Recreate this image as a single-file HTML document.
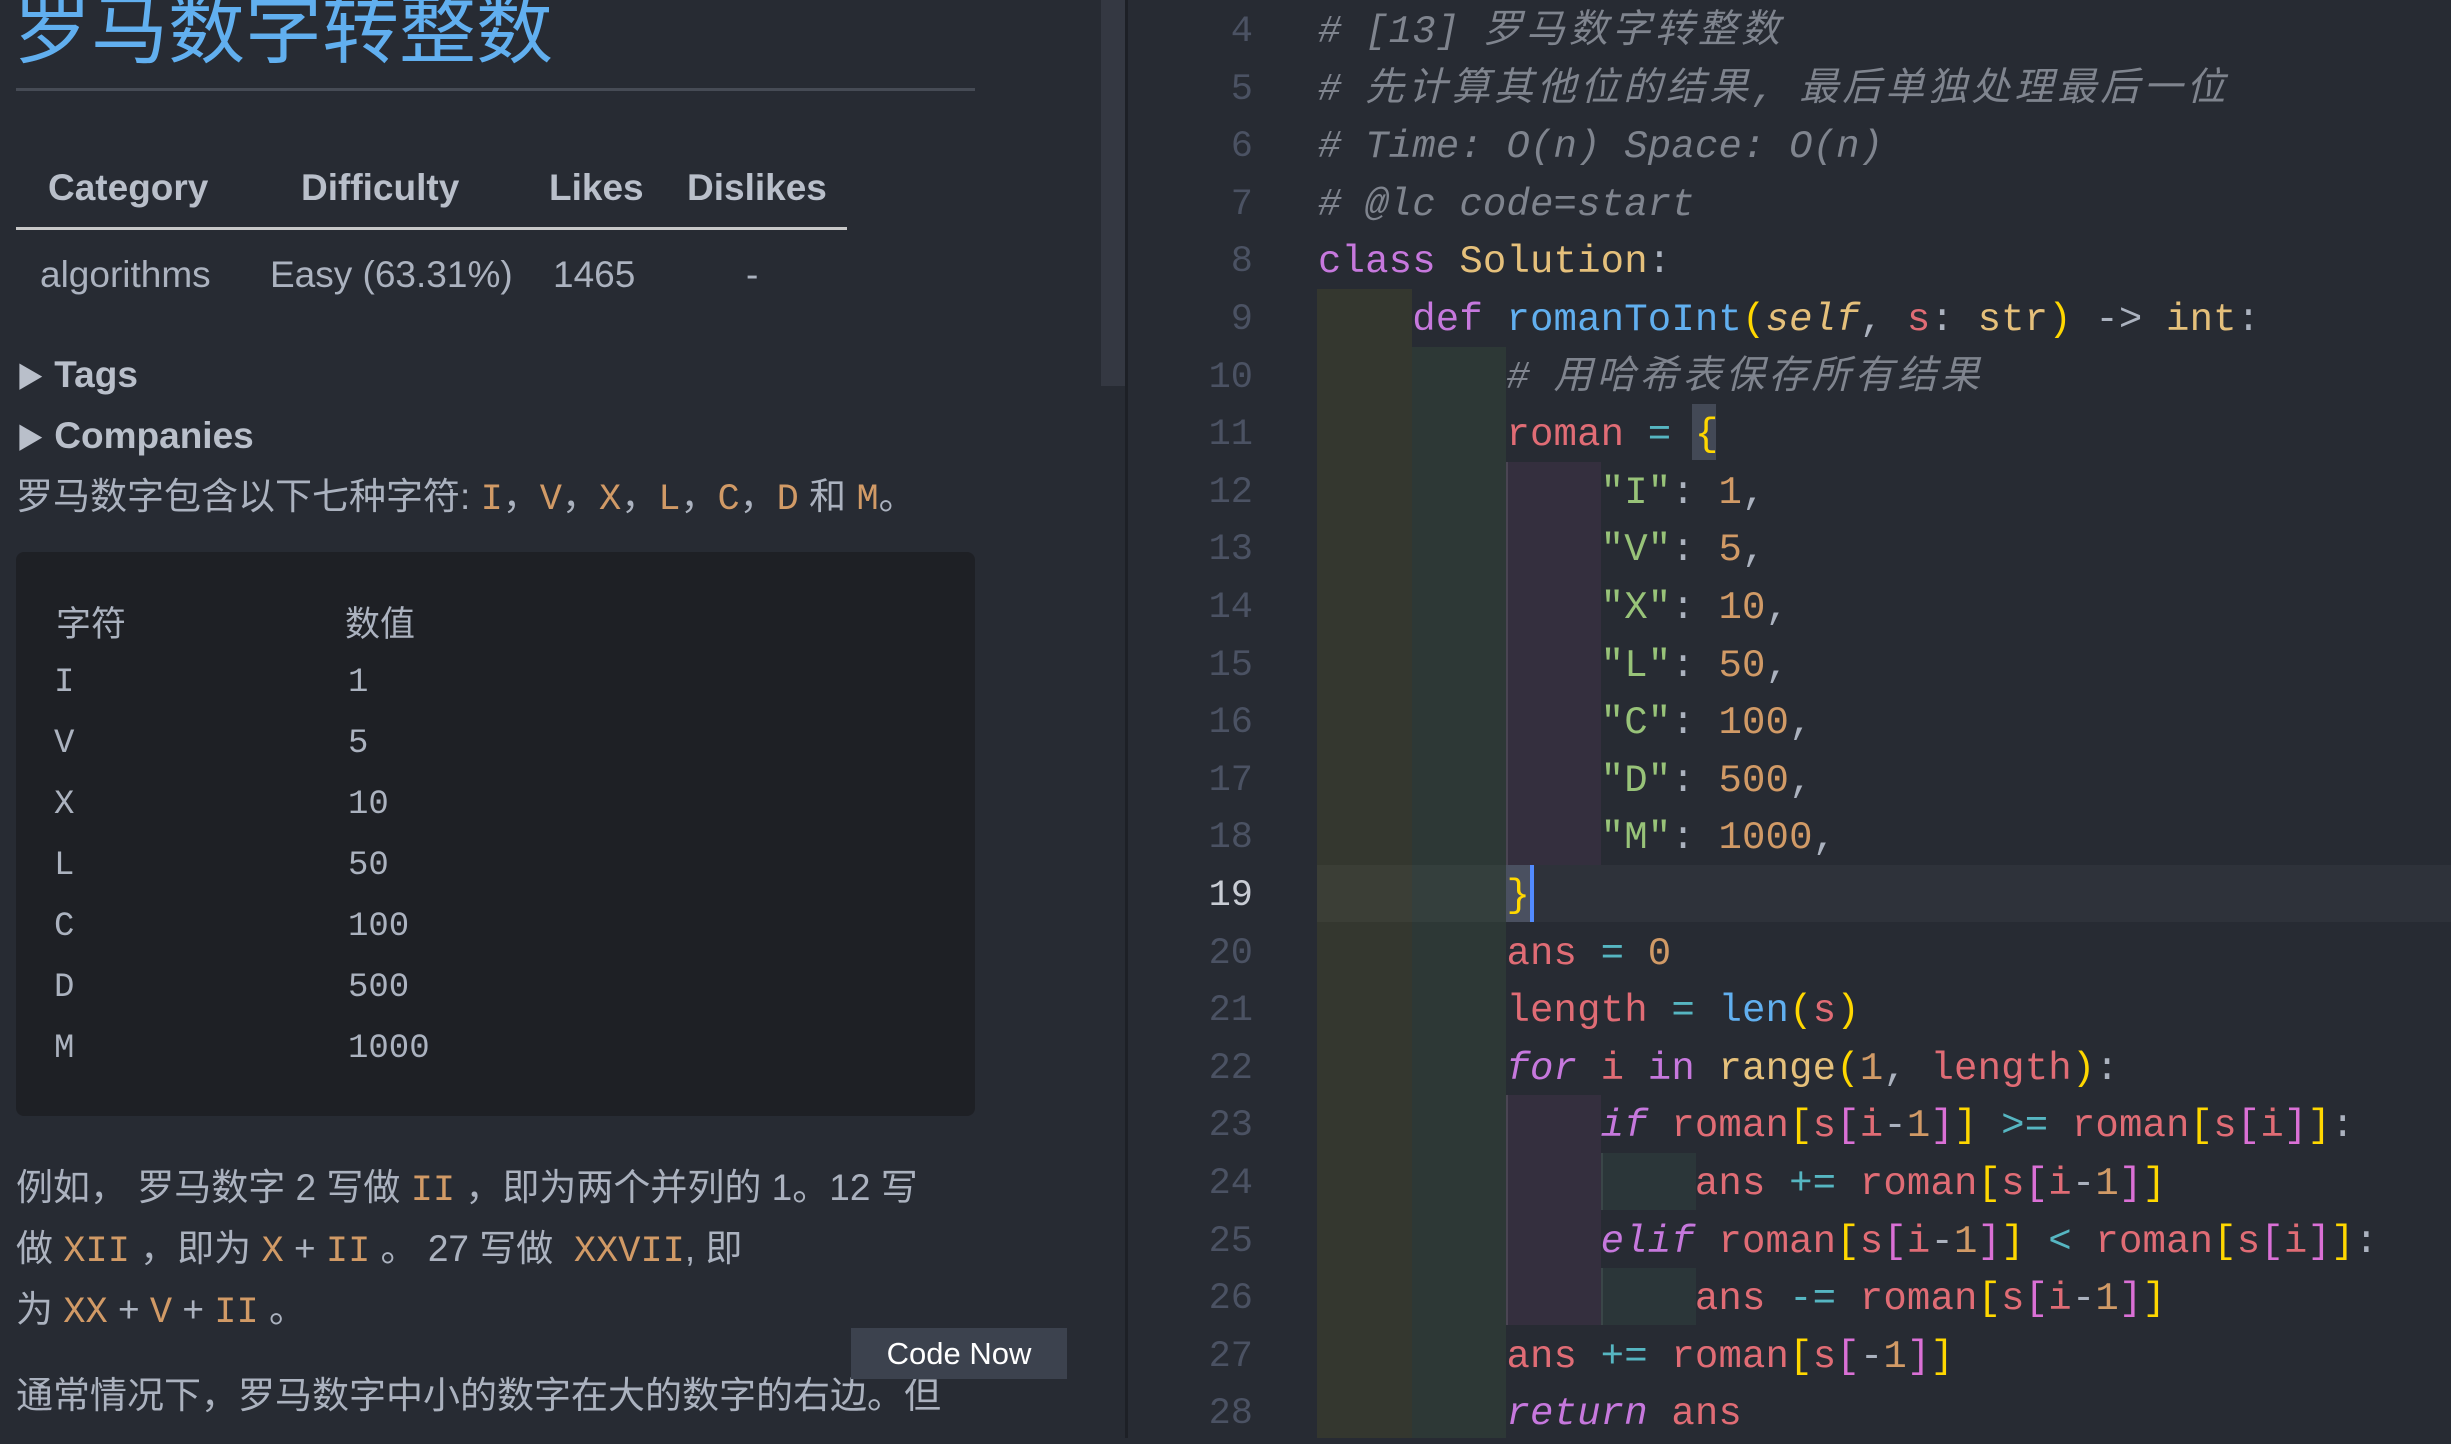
<!DOCTYPE html>
<html><head><meta charset="utf-8"><style>
*{margin:0;padding:0;box-sizing:border-box}
body{width:2451px;height:1438px;overflow:hidden;background:#272b33;position:relative;font-family:"Liberation Sans","Noto Sans CJK SC",sans-serif;color:#abb2bf}
.a{position:absolute;white-space:pre}
#left{position:absolute;left:0;top:0;width:1125px;height:1438px;background:#272b33;overflow:hidden}
#div{position:absolute;left:1125px;top:0;width:3px;height:1438px;background:#1d2026}
#sb{position:absolute;left:1101px;top:0;width:24px;height:386px;background:#343842}
.h{font-weight:bold;font-size:37px;color:#b9bfca;line-height:40px}
.t{font-size:37px;color:#abb2bf;line-height:40px}
.m{font-family:"Liberation Mono","Noto Sans CJK SC",monospace}
.o{color:#d19a66}
.code{position:absolute;left:16px;top:552px;width:959px;height:564px;background:#1e2025;border-radius:8px}
.ct{font-family:"Liberation Mono","Noto Sans CJK SC",monospace;font-size:34px;color:#abb2bf;line-height:40px}
.cz{font-family:"Noto Sans CJK SC",sans-serif;font-size:35px;color:#abb2bf}
.p{font-size:37px;line-height:40px;color:#abb2bf}
#right{position:absolute;left:1128px;top:0;width:1323px;height:1438px;background:#272b33}
.blk{position:absolute}
.ln{position:absolute;left:1128px;width:125px;text-align:right;font-family:"Liberation Mono",monospace;font-size:37px;color:#4b5263;line-height:57.6px;margin-top:3px}
.cl{position:absolute;left:1318px;font-family:"Liberation Mono","Noto Sans CJK SC",monospace;font-size:39px;line-height:57.6px;white-space:pre;color:#abb2bf;margin-top:3px;letter-spacing:0.15px}
.c{color:#7f848e;font-style:italic}
.cj{letter-spacing:4px}
.k{color:#c678dd}.ki{color:#c678dd;font-style:italic}
.y{color:#e5c07b}.yi{color:#e5c07b;font-style:italic}
.b{color:#61afef}.r{color:#e06c75}.g{color:#98c379}.n{color:#d19a66}.op{color:#56b6c2}
.b1{color:#ffd700}.b2{color:#da70d6}
</style></head><body>
<div id="left">
<div class="a" style="left:14px;top:-14px;font-size:77px;line-height:77px;color:#61afef;font-family:'Noto Sans CJK SC',sans-serif">罗马数字转整数</div>
<div class="a" style="left:16px;top:88px;width:959px;height:3px;background:#464b55"></div>
<div class="a h" style="left:48px;top:168px">Category</div>
<div class="a h" style="left:301px;top:168px">Difficulty</div>
<div class="a h" style="left:549px;top:168px">Likes</div>
<div class="a h" style="left:687px;top:168px">Dislikes</div>
<div class="a" style="left:16px;top:227px;width:831px;height:3px;background:#c8c8c8"></div>
<div class="a t" style="left:40px;top:255px">algorithms</div>
<div class="a t" style="left:270px;top:255px">Easy (63.31%)</div>
<div class="a t" style="left:553px;top:255px">1465</div>
<div class="a t" style="left:746px;top:255px">-</div>
<div class="a h" style="left:16px;top:355px"><span style="font-size:28px">▶</span> Tags</div>
<div class="a h" style="left:16px;top:416px"><span style="font-size:28px">▶</span> Companies</div>
<div class="a p" style="left:16px;top:477px">罗马数字包含以下七种字符: <span class="m o">I</span>，<span class="m o">V</span>，<span class="m o">X</span>，<span class="m o">L</span>，<span class="m o">C</span>，<span class="m o">D</span> 和 <span class="m o">M</span>。</div>
<div class="code"></div>
<div class="a cz" style="left:56px;top:596px">字符</div>
<div class="a cz" style="left:345px;top:596px">数值</div>
<div class="a ct" style="left:54px;top:663px">I</div><div class="a ct" style="left:348px;top:663px">1</div>
<div class="a ct" style="left:54px;top:724px">V</div><div class="a ct" style="left:348px;top:724px">5</div>
<div class="a ct" style="left:54px;top:785px">X</div><div class="a ct" style="left:348px;top:785px">10</div>
<div class="a ct" style="left:54px;top:846px">L</div><div class="a ct" style="left:348px;top:846px">50</div>
<div class="a ct" style="left:54px;top:907px">C</div><div class="a ct" style="left:348px;top:907px">100</div>
<div class="a ct" style="left:54px;top:968px">D</div><div class="a ct" style="left:348px;top:968px">500</div>
<div class="a ct" style="left:54px;top:1029px">M</div><div class="a ct" style="left:348px;top:1029px">1000</div>
<div class="a p" style="left:16px;top:1168px">例如， 罗马数字 2 写做 <span class="m o">II</span> ，即为两个并列的 1。12 写</div>
<div class="a p" style="left:16px;top:1229px">做 <span class="m o">XII</span> ，即为 <span class="m o">X</span> + <span class="m o">II</span> 。 27 写做  <span class="m o">XXVII</span>, 即</div>
<div class="a p" style="left:16px;top:1290px">为 <span class="m o">XX</span> + <span class="m o">V</span> + <span class="m o">II</span> 。</div>
<div class="a p" style="left:16px;top:1376px">通常情况下，罗马数字中小的数字在大的数字的右边。但</div>
<div class="a" style="left:851px;top:1328px;width:216px;height:51px;background:#3c424e;color:#fff;font-size:31px;line-height:51px;text-align:center">Code Now</div>
<div id="sb"></div>
</div>
<div id="div"></div>
<div id="right"></div>
<div class="blk" style="left:1317px;top:289px;width:95px;height:1149px;background:#34372f"></div>
<div class="blk" style="left:1412px;top:347px;width:94px;height:1091px;background:#2d3836"></div>
<div class="blk" style="left:1506px;top:462px;width:95px;height:403px;background:#342f3e;border-left:2px solid #4a4553"></div>
<div class="blk" style="left:1506px;top:1095px;width:95px;height:230px;background:#342f3e;border-left:2px solid #4a4553"></div>
<div class="blk" style="left:1601px;top:1153px;width:95px;height:57px;background:#2b3639;border-left:2px solid #3a4648"></div>
<div class="blk" style="left:1601px;top:1268px;width:95px;height:57px;background:#2b3639;border-left:2px solid #3a4648"></div>
<div class="blk" style="left:1317px;top:865px;width:1134px;height:57px;background:rgba(255,255,255,0.035)"></div>
<div class="blk" style="left:1506px;top:865px;width:24px;height:57px;background:#4a5060"></div>
<div class="blk" style="left:1530px;top:865px;width:4px;height:57px;background:#528bff"></div>
<div class="blk" style="left:1692px;top:404px;width:24px;height:56px;background:#434956"></div>
<div class="ln" style="top:1px">4</div>
<div class="ln" style="top:58.6px">5</div>
<div class="ln" style="top:116.2px">6</div>
<div class="ln" style="top:173.8px">7</div>
<div class="ln" style="top:231.4px">8</div>
<div class="ln" style="top:289px">9</div>
<div class="ln" style="top:346.6px">10</div>
<div class="ln" style="top:404.2px">11</div>
<div class="ln" style="top:461.8px">12</div>
<div class="ln" style="top:519.4px">13</div>
<div class="ln" style="top:577px">14</div>
<div class="ln" style="top:634.6px">15</div>
<div class="ln" style="top:692.2px">16</div>
<div class="ln" style="top:749.8px">17</div>
<div class="ln" style="top:807.4px">18</div>
<div class="ln" style="top:865px;color:#c8ccd4">19</div>
<div class="ln" style="top:922.6px">20</div>
<div class="ln" style="top:980.2px">21</div>
<div class="ln" style="top:1037.8px">22</div>
<div class="ln" style="top:1095.4px">23</div>
<div class="ln" style="top:1153px">24</div>
<div class="ln" style="top:1210.6px">25</div>
<div class="ln" style="top:1268.2px">26</div>
<div class="ln" style="top:1325.8px">27</div>
<div class="ln" style="top:1383.4px">28</div>
<div class="cl c" style="top:1px"># [13] <span class="cj">罗马数字转整数</span></div>
<div class="cl c" style="top:58.6px"># <span class="cj">先计算其他位的结果</span>, <span class="cj">最后单独处理最后一位</span></div>
<div class="cl c" style="top:116.2px"># Time: O(n) Space: O(n)</div>
<div class="cl c" style="top:173.8px"># @lc code=start</div>
<div class="cl" style="top:231.4px"><span class="k">class</span> <span class="y">Solution</span>:</div>
<div class="cl" style="top:289px">    <span class="k">def</span> <span class="b">romanToInt</span><span class="b1">(</span><span class="yi">self</span>, <span class="r">s</span>: <span class="y">str</span><span class="b1">)</span> -&gt; <span class="y">int</span>:</div>
<div class="cl c" style="top:346.6px">        # <span class="cj">用哈希表保存所有结果</span></div>
<div class="cl" style="top:404.2px">        <span class="r">roman</span> <span class="op">=</span> <span class="b1">{</span></div>
<div class="cl" style="top:461.8px">            <span class="g">"I"</span>: <span class="n">1</span>,</div>
<div class="cl" style="top:519.4px">            <span class="g">"V"</span>: <span class="n">5</span>,</div>
<div class="cl" style="top:577px">            <span class="g">"X"</span>: <span class="n">10</span>,</div>
<div class="cl" style="top:634.6px">            <span class="g">"L"</span>: <span class="n">50</span>,</div>
<div class="cl" style="top:692.2px">            <span class="g">"C"</span>: <span class="n">100</span>,</div>
<div class="cl" style="top:749.8px">            <span class="g">"D"</span>: <span class="n">500</span>,</div>
<div class="cl" style="top:807.4px">            <span class="g">"M"</span>: <span class="n">1000</span>,</div>
<div class="cl" style="top:865px">        <span class="b1">}</span></div>
<div class="cl" style="top:922.6px">        <span class="r">ans</span> <span class="op">=</span> <span class="n">0</span></div>
<div class="cl" style="top:980.2px">        <span class="r">length</span> <span class="op">=</span> <span class="b">len</span><span class="b1">(</span><span class="r">s</span><span class="b1">)</span></div>
<div class="cl" style="top:1037.8px">        <span class="ki">for</span> <span class="r">i</span> <span class="k">in</span> <span class="y">range</span><span class="b1">(</span><span class="n">1</span>, <span class="r">length</span><span class="b1">)</span>:</div>
<div class="cl" style="top:1095.4px">            <span class="ki">if</span> <span class="r">roman</span><span class="b1">[</span><span class="r">s</span><span class="b2">[</span><span class="r">i</span>-<span class="n">1</span><span class="b2">]</span><span class="b1">]</span> <span class="op">&gt;=</span> <span class="r">roman</span><span class="b1">[</span><span class="r">s</span><span class="b2">[</span><span class="r">i</span><span class="b2">]</span><span class="b1">]</span>:</div>
<div class="cl" style="top:1153px">                <span class="r">ans</span> <span class="op">+=</span> <span class="r">roman</span><span class="b1">[</span><span class="r">s</span><span class="b2">[</span><span class="r">i</span>-<span class="n">1</span><span class="b2">]</span><span class="b1">]</span></div>
<div class="cl" style="top:1210.6px">            <span class="ki">elif</span> <span class="r">roman</span><span class="b1">[</span><span class="r">s</span><span class="b2">[</span><span class="r">i</span>-<span class="n">1</span><span class="b2">]</span><span class="b1">]</span> <span class="op">&lt;</span> <span class="r">roman</span><span class="b1">[</span><span class="r">s</span><span class="b2">[</span><span class="r">i</span><span class="b2">]</span><span class="b1">]</span>:</div>
<div class="cl" style="top:1268.2px">                <span class="r">ans</span> <span class="op">-=</span> <span class="r">roman</span><span class="b1">[</span><span class="r">s</span><span class="b2">[</span><span class="r">i</span>-<span class="n">1</span><span class="b2">]</span><span class="b1">]</span></div>
<div class="cl" style="top:1325.8px">        <span class="r">ans</span> <span class="op">+=</span> <span class="r">roman</span><span class="b1">[</span><span class="r">s</span><span class="b2">[</span>-<span class="n">1</span><span class="b2">]</span><span class="b1">]</span></div>
<div class="cl" style="top:1383.4px">        <span class="ki">return</span> <span class="r">ans</span></div>
</body></html>
